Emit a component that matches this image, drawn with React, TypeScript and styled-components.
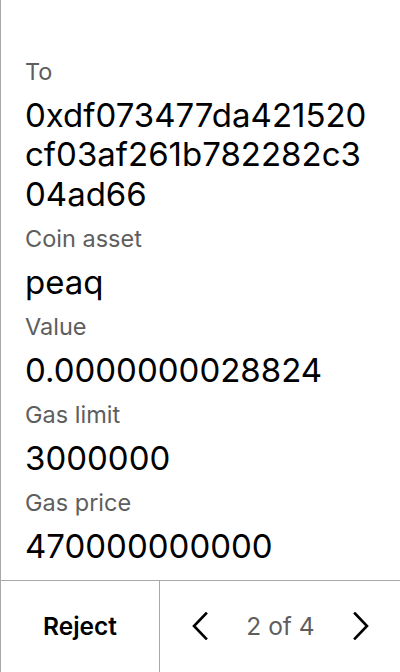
import React from "react";
import styled, { createGlobalStyle } from "styled-components";

const Global = createGlobalStyle`
  html, body { margin: 0; padding: 0; background: #ffffff; }
  body { font-family: Inter, "Noto Sans", sans-serif; -webkit-font-smoothing: antialiased; }
  #root { height: 672px; }
`;

const Screen = styled.div`
  width: 400px;
  height: 672px;
  box-sizing: border-box;
  border-left: 1px solid #a9a9a9;
  display: flex;
  flex-direction: column;
  background: #fff;
`;

const Details = styled.div`
  flex: 1;
  display: flex;
  flex-direction: column;
  gap: 11px;
  padding: 58px 24px 0 24px;
  overflow: hidden;
`;

const Field = styled.div`
  display: flex;
  flex-direction: column;
  gap: 9.5px;
`;

const Label = styled.div`
  font-size: 23.5px;
  line-height: 28px;
  color: #5e5e5e;
`;

const Value = styled.div`
  font-size: 33px;
  line-height: 39.5px;
  color: #000;
  word-break: break-all;
`;

const Footer = styled.div`
  height: 92px;
  border-top: 1px solid #a9a9a9;
  display: grid;
  grid-template-columns: 159px 1fr;
  box-sizing: border-box;
`;

const RejectButton = styled.button`
  border: none;
  border-right: 1px solid #a9a9a9;
  background: transparent;
  font-family: inherit;
  font-size: 24.5px;
  font-weight: 600;
  color: #000;
  padding: 0 0 2px 0;
  cursor: pointer;
`;

const Pager = styled.div`
  display: flex;
  align-items: center;
  justify-content: space-between;
  padding: 0 31px 2px 32px;
`;

const NavButton = styled.button`
  border: none;
  background: transparent;
  padding: 0;
  width: 16px;
  height: 28px;
  display: flex;
  align-items: center;
  justify-content: center;
  cursor: pointer;
`;

const PageText = styled.span`
  font-size: 24.5px;
  color: #5e5e5e;
`;

const Chevron = ({ dir }: { dir: "left" | "right" }) => (
  <svg width="16" height="28" viewBox="0 0 16 28" fill="none">
    <polyline
      points={dir === "left" ? "14,1.5 2,14 14,26.5" : "2,1.5 14,14 2,26.5"}
      stroke="#000"
      strokeWidth="2.6"
      strokeLinecap="square"
      strokeLinejoin="miter"
    />
  </svg>
);

const fields = [
  { label: "To", value: "0xdf073477da421520cf03af261b782282c304ad66" },
  { label: "Coin asset", value: "peaq" },
  { label: "Value", value: "0.0000000028824" },
  { label: "Gas limit", value: "3000000" },
  { label: "Gas price", value: "470000000000" },
];

export default function App() {
  return (
    <>
      <Global />
      <Screen>
        <Details>
          {fields.map((f) => (
            <Field key={f.label}>
              <Label>{f.label}</Label>
              <Value>{f.value}</Value>
            </Field>
          ))}
        </Details>
        <Footer>
          <RejectButton>Reject</RejectButton>
          <Pager>
            <NavButton aria-label="Previous">
              <Chevron dir="left" />
            </NavButton>
            <PageText>2 of 4</PageText>
            <NavButton aria-label="Next">
              <Chevron dir="right" />
            </NavButton>
          </Pager>
        </Footer>
      </Screen>
    </>
  );
}
